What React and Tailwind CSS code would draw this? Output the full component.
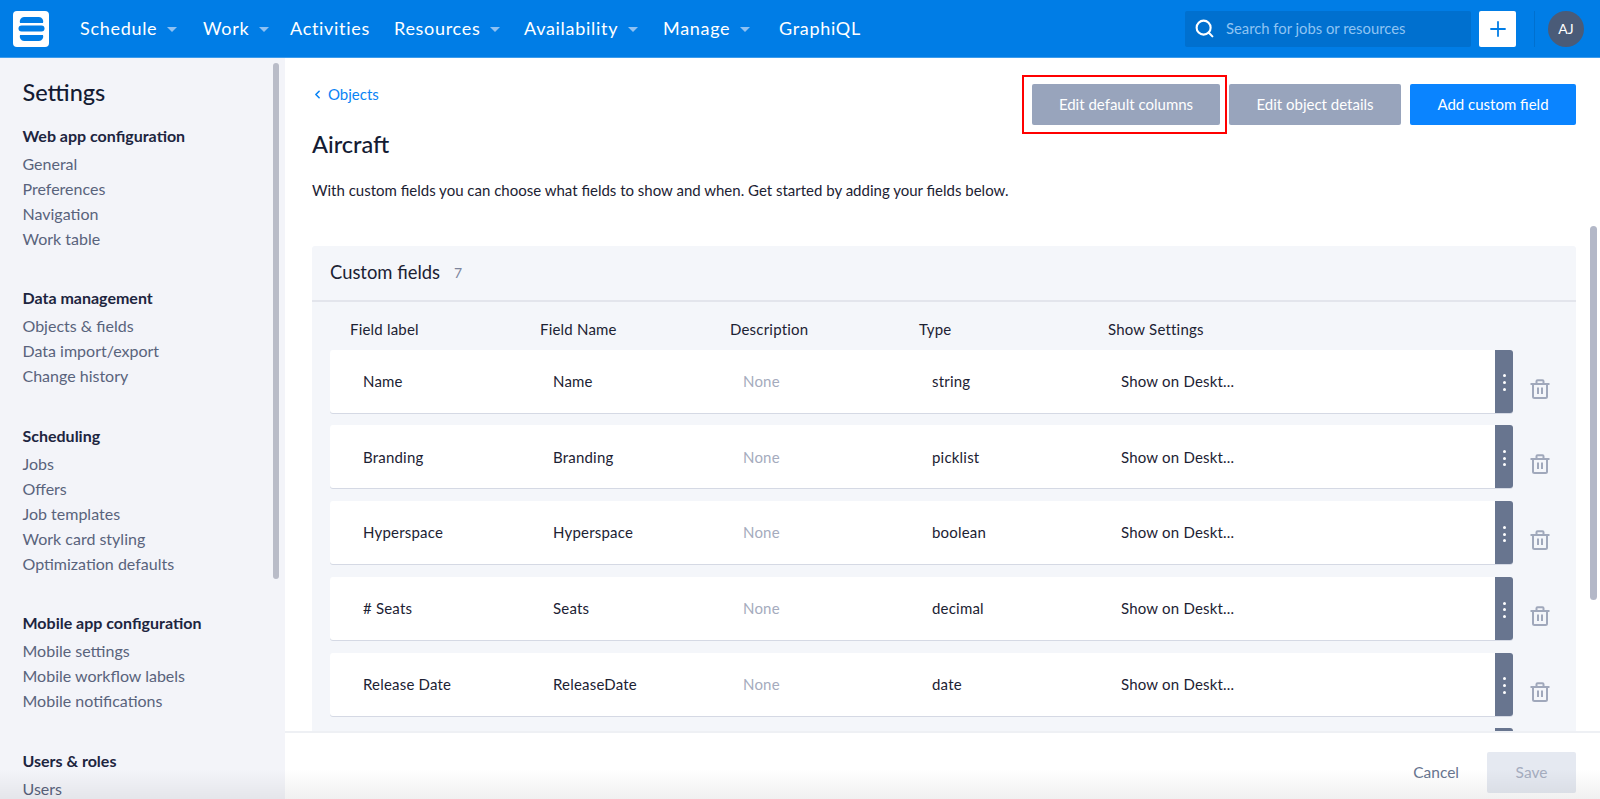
import React from 'react';
import { Search, Plus, ChevronLeft } from 'lucide-react';

const nav = [
  { label: 'Schedule', caret: true, cls: 'w-[123px]' },
  { label: 'Work', caret: true, cls: 'w-[87px]' },
  { label: 'Activities', cls: 'w-[104px]' },
  { label: 'Resources', caret: true, cls: 'w-[130px]' },
  { label: 'Availability', caret: true, cls: 'w-[139px]' },
  { label: 'Manage', caret: true, cls: 'w-[116px]' },
  { label: 'GraphiQL', cls: 'w-[90px]' },
];

const menu = [
  { title: 'Web app configuration', items: ['General', 'Preferences', 'Navigation', 'Work table'] },
  { title: 'Data management', items: ['Objects & fields', 'Data import/export', 'Change history'] },
  { title: 'Scheduling', items: ['Jobs', 'Offers', 'Job templates', 'Work card styling', 'Optimization defaults'] },
  { title: 'Mobile app configuration', items: ['Mobile settings', 'Mobile workflow labels', 'Mobile notifications'] },
  { title: 'Users & roles', items: ['Users'] },
];

const fields = [
  { label: 'Name', name: 'Name', type: 'string' },
  { label: 'Branding', name: 'Branding', type: 'picklist' },
  { label: 'Hyperspace', name: 'Hyperspace', type: 'boolean' },
  { label: '# Seats', name: 'Seats', type: 'decimal' },
  { label: 'Release Date', name: 'ReleaseDate', type: 'date' },
];

const Logo = () => (
  <svg width="36" height="36" viewBox="0 0 36 36">
    <rect width="36" height="36" rx="4" fill="#fff" />
    <path d="M11 6h15a4.500 4.500 0 0 1 4 6H7a4.500 4.500 0 0 1 4-6z" fill="#007de6" />
    <path d="M8.500 14.500h20a3 3 0 0 1 0 6h-20a3 3 0 0 1 0-6z" fill="#007de6" />
    <path d="M7 24h23a4.500 4.500 0 0 1-4 6H11a4.500 4.500 0 0 1-4-6z" fill="#007de6" />
  </svg>
);

const Caret = () => (
  <span className="ml-[10px] mt-[1px] border-x-[5px] border-t-[5px] border-x-transparent border-t-[#8fc1f2]" />
);

const Trash = () => (
  <svg width="20" height="20" viewBox="0 0 20 20" fill="none" stroke="#a0a8bb" strokeWidth="2">
    <path d="M0.500 5h19" />
    <path d="M6.500 5V2.200a1 1 0 0 1 1-1h5a1 1 0 0 1 1 1V5" />
    <path d="M3 5v12.500a1.500 1.500 0 0 0 1.500 1.500h11a1.500 1.500 0 0 0 1.500-1.500V5" />
    <path d="M8 8.500v6.500M12 8.500v6.500" />
  </svg>
);

const Row = ({ field }) => (
  <div className="flex items-center mb-[12.75px]">
    <div className="flex flex-1 h-[63px] items-center bg-white rounded-l-[3px] shadow-[0_1px_0_#d5d9e4] pl-[33px] text-[15px] tracking-[0.2px] text-[#1c2233]">
      <div className="w-[190px]">{field.label}</div>
      <div className="w-[190px]">{field.name}</div>
      <div className="w-[189px] text-[#a5abbd]">None</div>
      <div className="w-[189px]">{field.type}</div>
      <div>Show on Deskt...</div>
    </div>
    <div className="flex h-[63px] w-[18px] flex-col items-center justify-center gap-[3.700px] rounded-r-[3px] bg-[#68758f] pt-[3px] shadow-[0_1px_0_#d5d9e4]">
      <span className="h-[3px] w-[3px] rounded-full bg-white" />
      <span className="h-[3px] w-[3px] rounded-full bg-white" />
      <span className="h-[3px] w-[3px] rounded-full bg-white" />
    </div>
    <div className="flex w-[63px] shrink-0 justify-center pr-[9px] pt-[15px]">
      <Trash />
    </div>
  </div>
);

export default function App() {
  return (
    <div className="relative flex h-screen flex-col overflow-hidden bg-white font-['Lato','Open_Sans',sans-serif]">
      <header className="flex h-[58px] shrink-0 items-center bg-[#007de6] pl-[13px] pr-[16px] border-b border-[#3d9cec]">
        <Logo />
        <nav className="ml-[31px] flex items-center text-[18px] tracking-[0.7px] text-white">
          {nav.map((item) => (
            <div key={item.label} className={`flex items-center ${item.cls}`}>
              {item.label}
              {item.caret && <Caret />}
            </div>
          ))}
        </nav>
        <div className="ml-auto flex h-[36px] w-[286px] items-center rounded-[2px] bg-[#0070cf] pl-[9px] text-[14.800px] text-[#8fc4f3]">
          <Search size={21} strokeWidth={2.400} className="text-white" />
          <span className="ml-[11px]">Search for jobs or resources</span>
        </div>
        <button className="ml-[8px] flex h-[36px] w-[37px] items-center justify-center rounded-[2px] bg-white text-[#007de6]">
          <Plus size={24} strokeWidth={1.800} />
        </button>
        <div className="ml-[18px] h-[36px] w-px bg-[#0070cf]" />
        <div className="ml-[13px] flex h-[36px] w-[36px] items-center justify-center rounded-full bg-[#4a5b78] text-[14px] text-white">AJ</div>
      </header>

      <div className="flex min-h-0 flex-1">
        <aside className="relative w-[285px] shrink-0 overflow-hidden bg-[#f3f4f9] pl-[22.500px] pt-[19px]">
          <div className="mb-[15.500px] text-[23.500px] font-medium leading-[30px] text-[#141b33]">Settings</div>
          {menu.map((group) => (
            <div key={group.title} className="mb-[34.500px]">
              <div className="mb-[3px] text-[16px] font-bold leading-[25px] text-[#1d2540]">{group.title}</div>
              {group.items.map((item) => (
                <div key={item} className="text-[16px] leading-[25px] text-[#59637c]">{item}</div>
              ))}
            </div>
          ))}
          <div className="absolute left-[273px] top-[5px] h-[516px] w-[6px] rounded-full bg-[#b9bcc8]" />
        </aside>

        <main className="relative flex min-w-0 flex-1 flex-col">
          <div className="min-h-0 flex-1 overflow-hidden pl-[27px] pr-[24px] pt-[25.500px]">
            <div className="flex items-start justify-between">
              <a className="mt-[1px] flex h-[20px] items-center text-[15px] text-[#0a84f5]">
                <ChevronLeft size={13} strokeWidth={3} className="-ml-[1px]" />
                <span className="ml-[4px]">Objects</span>
              </a>
              <div className="flex gap-[9px] text-[15px] text-white">
                <div className="relative">
                  <button className="h-[41px] w-[188px] rounded-[2px] bg-[#98a4bc]">Edit default columns</button>
                  <span className="pointer-events-none absolute -bottom-[9px] -left-[10px] -right-[7px] -top-[9px] border-2 border-[#ff0000]" />
                </div>
                <button className="h-[41px] w-[172px] rounded-[2px] bg-[#98a4bc]">Edit object details</button>
                <button className="h-[41px] w-[166px] rounded-[2px] bg-[#0a84ff]">Add custom field</button>
              </div>
            </div>
            <h1 className="mt-[4px] text-[23.500px] font-medium leading-[30px] text-[#141b33]">Aircraft</h1>
            <p className="mt-[21px] text-[15px] leading-[20px] text-[#1c2233]">
              With custom fields you can choose what fields to show and when. Get started by adding your fields below.
            </p>
            <section className="mt-[46px] rounded-t-[3px] bg-[#f4f6fa]">
              <div className="flex h-[56px] items-center border-b-2 border-[#e3e5ec] pl-[18px]">
                <span className="text-[18.400px] text-[#1c2233]">Custom fields</span>
                <span className="ml-[14px] text-[14px] text-[#7d859b]">7</span>
              </div>
              <div className="flex h-[48px] items-center pl-[38px] pt-[8px] text-[15px] tracking-[0.2px] text-[#1c2233]">
                <div className="w-[190px]">Field label</div>
                <div className="w-[190px]">Field Name</div>
                <div className="w-[189px]">Description</div>
                <div className="w-[189px]">Type</div>
                <div>Show Settings</div>
              </div>
              <div className="pl-[18px]">
                {fields.map((f) => (
                  <Row key={f.label} field={f} />
                ))}
                <div className="mr-[63px] flex h-[6px] justify-end">
                  <div className="h-full w-[18px] rounded-tr-[3px] bg-[#68758f]" />
                </div>
              </div>
            </section>
          </div>
          <footer className="relative flex h-[68px] shrink-0 items-start justify-end border-t-2 border-[#eef0f4] bg-white pr-[24px] pt-[19px]">
            <span className="mr-[28px] flex h-[41px] items-center text-[15.500px] text-[#68758f]">Cancel</span>
            <button className="h-[41px] w-[89px] rounded-[2px] bg-[#e5e9f1] text-[15.500px] text-[#a5adbf]">Save</button>
          </footer>
        </main>
      </div>
      <div className="absolute left-[1590px] top-[226px] h-[374px] w-[7px] rounded-full bg-[#b3b8c8]" />
      <div className="pointer-events-none absolute inset-x-0 bottom-0 h-[30px] bg-gradient-to-b from-transparent to-[#0000000f]" />
    </div>
  );
}
